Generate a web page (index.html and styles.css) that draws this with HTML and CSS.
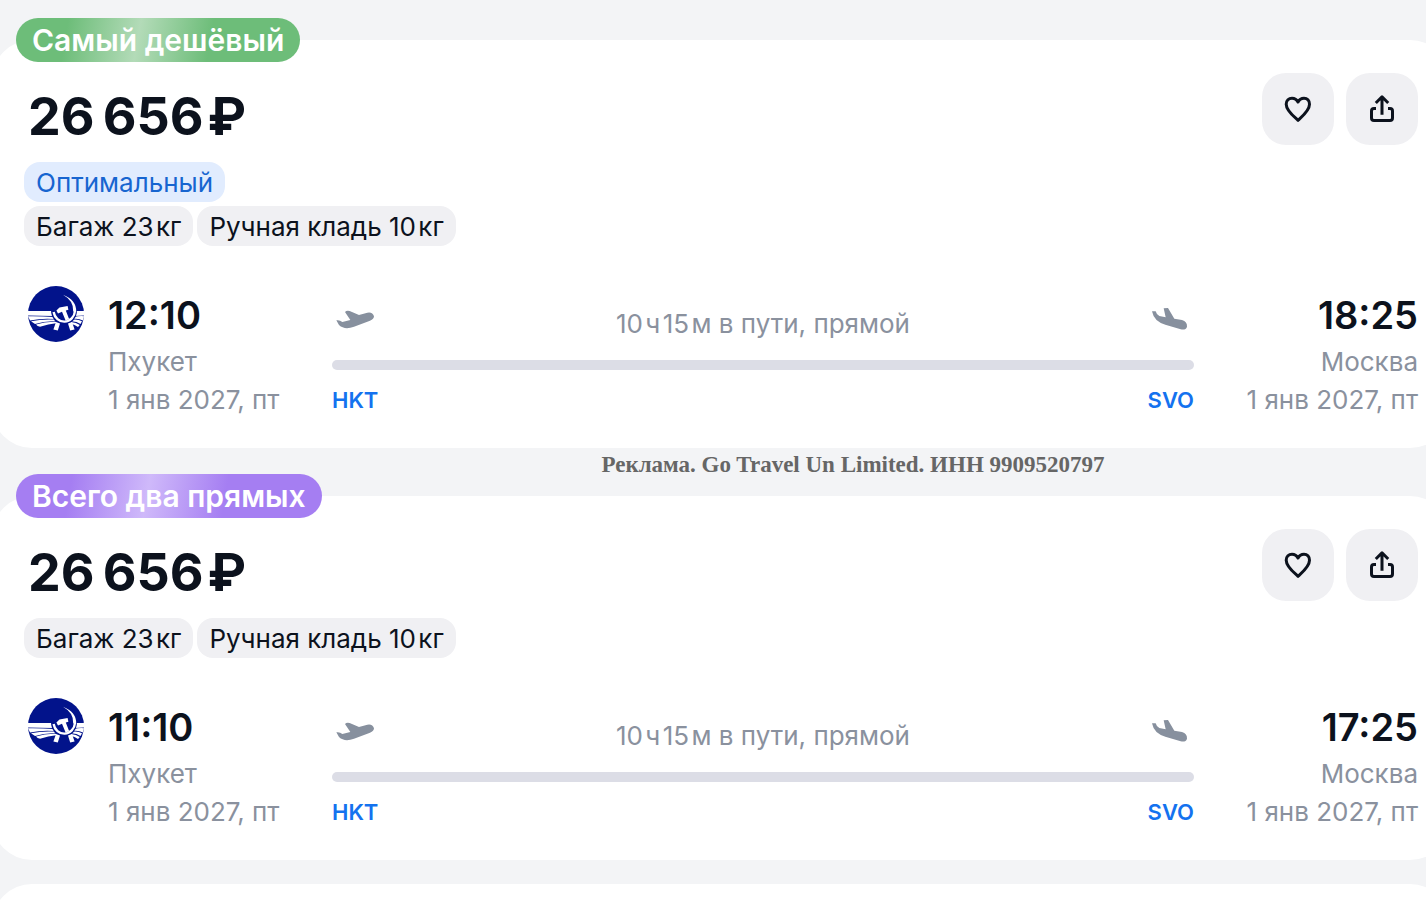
FILE: index.html
```html
<!DOCTYPE html>
<html lang="ru">
<head>
    <meta charset="UTF-8">
    <meta name="viewport" content="width=device-width, initial-scale=1.0">
    <title>Пхукет — Москва</title>
    <link rel="stylesheet" href="styles.css">
</head>
<body>
    <!-- shared icons -->
    <svg class="sprite" aria-hidden="true">
        <symbol id="heart" viewBox="0 0 32 32">
            <path d="M16 27.3C14.8 25.8 4.2 18.3 4.2 11.2C4.2 7.6 6.8 5.2 10 5.2C12.6 5.2 14.8 6.6 16 9C17.2 6.6 19.4 5.2 22 5.2C25.2 5.2 27.5 7.6 27.5 11.2C27.5 18.3 17.2 25.8 16 27.3Z"/>
        </symbol>
        <symbol id="share" viewBox="0 0 32 32">
            <path d="M16 21.7V4M9.8 10L16 3.8L22.2 10M10 15.5H8Q5.5 15.5 5.5 18V25Q5.5 27.5 8 27.5H24Q26.5 27.5 26.5 25V18Q26.5 15.5 24 15.5H22"/>
        </symbol>
        <symbol id="takeoff" viewBox="36 42 132 96">
            <path d="M49 91Q59 89 67 96L91 90L75 66Q80 60 89 63L117 75L142 68Q158 65 162 79Q162 87 150 92L102 110Q74 121 57 105Z"/>
        </symbol>
        <symbol id="landing" viewBox="30 27 132 96">
            <path d="M36 49L47 49Q50 60 58 63L77 67L71 40L84 39L103 71L126 75Q142 80 141 95Q138 106 122 103L76 89Q42 80 36 49Z"/>
        </symbol>
        <symbol id="airline" viewBox="0 0 56 56">
            <circle cx="28" cy="28" r="28" fill="#02138b"/>
            <g fill="#fff">
                <path d="M0 25H24.5L25 30Q12 29.4 0 29.4Z"/>
                <path d="M0 30.2Q14 30 25.5 31L26.5 33Q14 32 2 34.4Z"/>
                <path d="M3 35.2Q14 32.8 26.5 33.6L27 35.2Q17 34.7 7 38Z"/>
                <path d="M8 38.6Q17 35.4 28 35.8L28 37.2Q20 38 13 40.6Q9.5 41 8 38.6Z"/>
                <path d="M47 25H56V29.4Q52 29.4 46 30Z"/>
                <path d="M46 31Q51 29.8 56 30.2L55 34.4Q50 32 45 33Z"/>
                <path d="M44.5 33.8Q50 33 54 35.2L52.5 38Q49 35.3 43.5 35.2Z"/>
                <path d="M43 36Q48.5 36.3 51.8 39L50 41Q47 38.5 42 37.5Z"/>
            </g>
            <path d="M24.5 24A11.5 13.5 0 0 0 47.5 24Z" fill="#02138b" stroke="#02138b" stroke-width="3"/>
            <path d="M25.6 26A10.8 11.6 0 0 0 47 25" fill="none" stroke="#fff" stroke-width="2.4"/>
            <g fill="#fff">
                <path d="M28 36L32 37.5L29.8 44.4L25.4 43.4ZM44 36L40 37.5L42.2 44.4L46.6 43.4Z"/>
                <path d="M35 8.8Q48.4 14 48.2 25.5H45.2Q46 15 35 8.8Z"/>
                <path d="M28.4 24.4L31.5 21.6L39.6 20L40.4 23.8L37.8 24.6L41.2 33.2L37.6 34.6L34 25.8L30 27.4Z"/>
            </g>
        </symbol>
    </svg>

    <main class="tickets">
        <article class="card">
            <span class="badge badge-green">Самый дешёвый</span>
            <div class="card-header">
                <h2 class="price">26&#8201;656&#8202;₽</h2>
                <div class="actions">
                    <button class="action" type="button" aria-label="В избранное"><svg><use href="#heart"/></svg></button>
                    <button class="action" type="button" aria-label="Поделиться"><svg><use href="#share"/></svg></button>
                </div>
            </div>
            <div class="tags">
                <div class="tag-row"><span class="tag tag-blue">Оптимальный</span></div>
                <div class="tag-row">
                    <span class="tag">Багаж 23&#8202;кг</span>
                    <span class="tag">Ручная кладь 10&#8202;кг</span>
                </div>
            </div>
            <div class="flight">
                <svg class="airline"><use href="#airline"/></svg>
                <div class="point">
                    <div class="time">12:10</div>
                    <div>Пхукет</div>
                    <div>1 янв 2027, пт</div>
                </div>
                <div class="route">
                    <div class="route-info">
                        <svg class="plane"><use href="#takeoff"/></svg>
                        <span>10&#8202;ч&#8202;15&#8202;м в пути, прямой</span>
                        <svg class="plane"><use href="#landing"/></svg>
                    </div>
                    <div class="route-line"></div>
                    <div class="airports"><span>HKT</span><span>SVO</span></div>
                </div>
                <div class="point point-end">
                    <div class="time">18:25</div>
                    <div>Москва</div>
                    <div>1 янв 2027, пт</div>
                </div>
            </div>
        </article>

        <p class="ad">Реклама. Go Travel Un Limited. ИНН 9909520797</p>

        <article class="card">
            <span class="badge badge-purple">Всего два прямых</span>
            <div class="card-header">
                <h2 class="price">26&#8201;656&#8202;₽</h2>
                <div class="actions">
                    <button class="action" type="button" aria-label="В избранное"><svg><use href="#heart"/></svg></button>
                    <button class="action" type="button" aria-label="Поделиться"><svg><use href="#share"/></svg></button>
                </div>
            </div>
            <div class="tags">
                <div class="tag-row">
                    <span class="tag">Багаж 23&#8202;кг</span>
                    <span class="tag">Ручная кладь 10&#8202;кг</span>
                </div>
            </div>
            <div class="flight">
                <svg class="airline"><use href="#airline"/></svg>
                <div class="point">
                    <div class="time">11:10</div>
                    <div>Пхукет</div>
                    <div>1 янв 2027, пт</div>
                </div>
                <div class="route">
                    <div class="route-info">
                        <svg class="plane"><use href="#takeoff"/></svg>
                        <span>10&#8202;ч&#8202;15&#8202;м в пути, прямой</span>
                        <svg class="plane"><use href="#landing"/></svg>
                    </div>
                    <div class="route-line"></div>
                    <div class="airports"><span>HKT</span><span>SVO</span></div>
                </div>
                <div class="point point-end">
                    <div class="time">17:25</div>
                    <div>Москва</div>
                    <div>1 янв 2027, пт</div>
                </div>
            </div>
        </article>

        <article class="card card-next"></article>
    </main>
</body>
</html>
```
FILE: styles.css
```css
* {
    box-sizing: border-box;
}
body {
    margin: 0;
    background: #f3f4f6;
    color: #0c121d;
    font-family: Inter, "Liberation Sans", sans-serif;
    font-size: 26px;
}
.sprite {
    position: absolute;
    width: 0;
    height: 0;
}
.tickets {
    height: 100vh;
    padding-top: 40px;
    overflow: hidden;
}
/* cards run past both edges of the window */
.card {
    position: relative;
    margin: 0 -24px 0 -8px;
    padding: 33px 32px 29px;
    background: #fff;
    border-radius: 40px;
}
.card-next {
    height: 160px;
    margin-top: 24px;
}
.badge {
    position: absolute;
    top: -22px;
    left: 24px;
    padding: 0 16px;
    border-radius: 22px;
    color: #fff;
    font-size: 30px;
    font-weight: 600;
    line-height: 44px;
}
.badge-green {
    background: linear-gradient(100deg, #6dbd79 18%, #b3dbb8 43%, #6dbd79 68%);
}
.badge-purple {
    background: linear-gradient(100deg, #a57ef2 18%, #cfb9fa 43%, #a57ef2 68%);
}
.card-header {
    display: flex;
    justify-content: space-between;
    align-items: flex-start;
}
.price {
    margin: 0;
    padding-left: 4px;
    font-size: 52px;
    font-weight: 700;
    line-height: 88px;
}
.actions {
    display: flex;
    gap: 12px;
}
.action {
    display: flex;
    align-items: center;
    justify-content: center;
    width: 72px;
    height: 72px;
    padding: 0;
    border: none;
    border-radius: 24px;
    background: #f0f0f3;
    color: #0c121d;
    cursor: pointer;
}
.action svg {
    width: 32px;
    height: 32px;
    fill: none;
    stroke: currentColor;
    stroke-width: 3px;
    stroke-linejoin: round;
}
.tags {
    display: flex;
    flex-direction: column;
    gap: 4px;
    margin-top: 1px;
}
.tag-row {
    display: flex;
    gap: 4px;
}
.tag {
    height: 40px;
    padding: 0 12px;
    border-radius: 16px;
    background: #f0f0f3;
    line-height: 42px;
}
.tag-blue {
    background: #e1ecfe;
    color: #1765d0;
}
.flight {
    display: flex;
    margin-top: 40px;
    padding-left: 4px;
    color: #8a919e;
    line-height: 38px;
    white-space: nowrap;
}
.airline {
    flex: none;
    width: 56px;
    height: 56px;
    margin-right: 24px;
}
.point {
    flex: none;
    width: 176px;
}
.point-end {
    text-align: right;
}
.time {
    padding-top: 2px;
    color: #0c121d;
    font-size: 38px;
    font-weight: 600;
    line-height: 55px;
}
.route {
    flex: 1;
    margin: 0 48px;
    padding-top: 18px;
}
.route-info {
    display: flex;
    justify-content: space-between;
    height: 56px;
    line-height: 40px;
}
.plane {
    width: 44px;
    height: 32px;
    fill: #87909e;
}
.route-line {
    height: 10px;
    border-radius: 5px;
    background: #dcdde6;
}
.airports {
    display: flex;
    justify-content: space-between;
    margin-top: 11px;
    color: #1472ef;
    font-size: 22px;
    font-weight: 600;
}
.ad {
    margin: 0;
    padding: 0 0 14px 280px;
    color: #666;
    font-family: "Liberation Serif", serif;
    font-size: 23px;
    font-weight: 700;
    line-height: 34px;
    text-align: center;
}
```
